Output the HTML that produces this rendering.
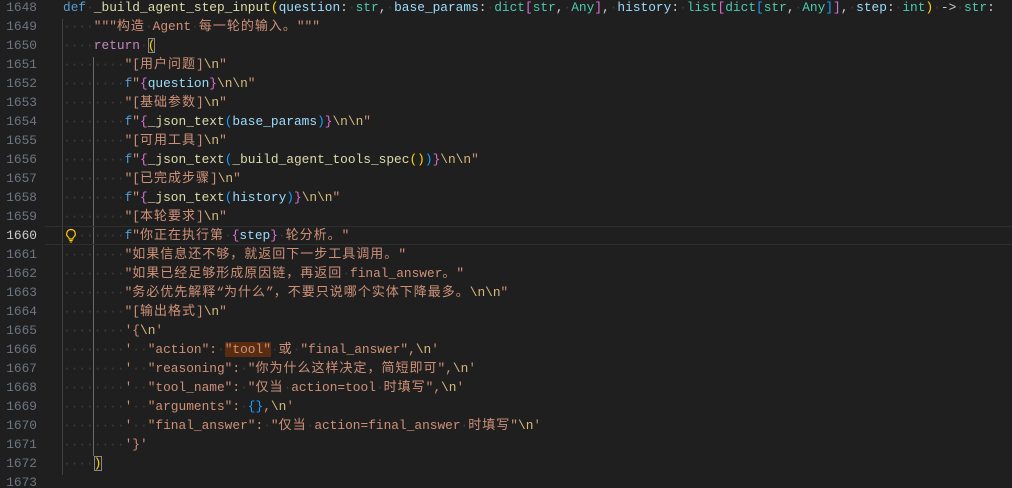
<!DOCTYPE html>
<html><head><meta charset="utf-8"><style>
html,body{margin:0;padding:0;background:#1f1f1f;width:1012px;height:488px;overflow:hidden}
#w{position:relative;top:-2px}
.l{position:relative;height:19px;line-height:19px;white-space:pre;font-family:"Liberation Mono","Noto Sans CJK SC",monospace;font-size:12.83px;color:#cccccc}
.z{font-family:"Noto Sans CJK SC",sans-serif;font-size:13px;letter-spacing:1px;line-height:0}
.n{position:absolute;left:0;width:37px;text-align:right;color:#6e7681}
.c{position:absolute;left:63px;top:0;height:19px}
.k{color:#569cd6}.fn{color:#dcdcaa}.p{color:#9cdcfe}.t{color:#4ec9b0}.s{color:#ce9178}.r{color:#c586c0}.e{color:#d7ba7d}
.b1{color:#ffd700}.b2{color:#da70d6}.b3{color:#179fff}.w{color:#3c3c3c}
.box{outline:1px solid #888;outline-offset:-1px}
.hl{background:#5a2d10}
.g{position:absolute;width:1px;background:#404040}
.cur{position:absolute;left:45px;right:0;border-top:1px solid #2e2e2e;border-bottom:1px solid #2e2e2e;height:17px}
</style></head><body><div id="w">
<div class="g" style="left:62px;top:21px;height:456px"></div>
<div class="g" style="left:93px;top:59px;height:399px;background:#6a6a6a"></div>
<div class="l"><span class="n">1648</span><span class="c"><span class="k">def</span><span class="w">·</span><span class="fn">_build_agent_step_input</span><span class="b1">(</span><span class="p">question</span>:<span class="w">·</span><span class="t">str</span>,<span class="w">·</span><span class="p">base_params</span>:<span class="w">·</span><span class="t">dict</span><span class="b2">[</span><span class="t">str</span>,<span class="w">·</span><span class="t">Any</span><span class="b2">]</span>,<span class="w">·</span><span class="p">history</span>:<span class="w">·</span><span class="t">list</span><span class="b2">[</span><span class="t">dict</span><span class="b3">[</span><span class="t">str</span>,<span class="w">·</span><span class="t">Any</span><span class="b3">]</span><span class="b2">]</span>,<span class="w">·</span><span class="p">step</span>:<span class="w">·</span><span class="t">int</span><span class="b1">)</span><span class="w">·</span>-&gt;<span class="w">·</span><span class="t">str</span>:</span></div>
<div class="l"><span class="n">1649</span><span class="c"><span class="w">····</span><span class="s">"""<span class="z">构造</span></span><span class="w">·</span><span class="s">Agent</span><span class="w">·</span><span class="s"><span class="z">每一轮的输入。</span>"""</span></span></div>
<div class="l"><span class="n">1650</span><span class="c"><span class="w">····</span><span class="r">return</span><span class="w">·</span><span class="b1 box">(</span></span></div>
<div class="l"><span class="n">1651</span><span class="c"><span class="w">········</span><span class="s">"[<span class="z">用户问题</span>]</span><span class="e">\n</span><span class="s">"</span></span></div>
<div class="l"><span class="n">1652</span><span class="c"><span class="w">········</span><span class="k">f</span><span class="s">"</span><span class="b2">{</span><span class="p">question</span><span class="b2">}</span><span class="e">\n\n</span><span class="s">"</span></span></div>
<div class="l"><span class="n">1653</span><span class="c"><span class="w">········</span><span class="s">"[<span class="z">基础参数</span>]</span><span class="e">\n</span><span class="s">"</span></span></div>
<div class="l"><span class="n">1654</span><span class="c"><span class="w">········</span><span class="k">f</span><span class="s">"</span><span class="b2">{</span><span class="fn">_json_text</span><span class="b3">(</span><span class="p">base_params</span><span class="b3">)</span><span class="b2">}</span><span class="e">\n\n</span><span class="s">"</span></span></div>
<div class="l"><span class="n">1655</span><span class="c"><span class="w">········</span><span class="s">"[<span class="z">可用工具</span>]</span><span class="e">\n</span><span class="s">"</span></span></div>
<div class="l"><span class="n">1656</span><span class="c"><span class="w">········</span><span class="k">f</span><span class="s">"</span><span class="b2">{</span><span class="fn">_json_text</span><span class="b3">(</span><span class="fn">_build_agent_tools_spec</span><span class="b1">()</span><span class="b3">)</span><span class="b2">}</span><span class="e">\n\n</span><span class="s">"</span></span></div>
<div class="l"><span class="n">1657</span><span class="c"><span class="w">········</span><span class="s">"[<span class="z">已完成步骤</span>]</span><span class="e">\n</span><span class="s">"</span></span></div>
<div class="l"><span class="n">1658</span><span class="c"><span class="w">········</span><span class="k">f</span><span class="s">"</span><span class="b2">{</span><span class="fn">_json_text</span><span class="b3">(</span><span class="p">history</span><span class="b3">)</span><span class="b2">}</span><span class="e">\n\n</span><span class="s">"</span></span></div>
<div class="l"><span class="n">1659</span><span class="c"><span class="w">········</span><span class="s">"[<span class="z">本轮要求</span>]</span><span class="e">\n</span><span class="s">"</span></span></div>
<div class="l"><div class="cur"></div><span class="n" style="color:#cccccc">1660</span><span class="c"><span class="w">········</span><span class="k">f</span><span class="s">"<span class="z">你正在执行第</span></span><span class="w">·</span><span class="b2">{</span><span class="p">step</span><span class="b2">}</span><span class="w">·</span><span class="s"><span class="z">轮分析。</span>"</span></span><svg style="position:absolute;left:64px;top:2px" width="14" height="15" viewBox="0 0 14 15"><path d="M7 1.5a4.3 4.3 0 0 0-2.6 7.7c.6.5.8 1 .8 1.8h3.6c0-.8.2-1.3.8-1.8A4.3 4.3 0 0 0 7 1.5z" fill="none" stroke="#ffcc00" stroke-width="1.2"/><path d="M5.3 12.5h3.4M5.8 14h2.4" stroke="#ffcc00" stroke-width="1.1"/></svg></div>
<div class="l"><span class="n">1661</span><span class="c"><span class="w">········</span><span class="s">"<span class="z">如果信息还不够，就返回下一步工具调用。</span>"</span></span></div>
<div class="l"><span class="n">1662</span><span class="c"><span class="w">········</span><span class="s">"<span class="z">如果已经足够形成原因链，再返回</span></span><span class="w">·</span><span class="s">final_answer<span class="z">。</span>"</span></span></div>
<div class="l"><span class="n">1663</span><span class="c"><span class="w">········</span><span class="s">"<span class="z">务必优先解释</span>“<span class="z">为什么</span>”<span class="z">，不要只说哪个实体下降最多。</span></span><span class="e">\n\n</span><span class="s">"</span></span></div>
<div class="l"><span class="n">1664</span><span class="c"><span class="w">········</span><span class="s">"[<span class="z">输出格式</span>]</span><span class="e">\n</span><span class="s">"</span></span></div>
<div class="l"><span class="n">1665</span><span class="c"><span class="w">········</span><span class="s">'{</span><span class="e">\n</span><span class="s">'</span></span></div>
<div class="l"><span class="n">1666</span><span class="c"><span class="w">········</span><span class="s">'</span><span class="w">··</span><span class="s">"action":</span><span class="w">·</span><span class="s hl">"tool"</span><span class="w">·</span><span class="s z">或</span><span class="w">·</span><span class="s">"final_answer",</span><span class="e">\n</span><span class="s">'</span></span></div>
<div class="l"><span class="n">1667</span><span class="c"><span class="w">········</span><span class="s">'</span><span class="w">··</span><span class="s">"reasoning":</span><span class="w">·</span><span class="s">"<span class="z">你为什么这样决定，简短即可</span>",</span><span class="e">\n</span><span class="s">'</span></span></div>
<div class="l"><span class="n">1668</span><span class="c"><span class="w">········</span><span class="s">'</span><span class="w">··</span><span class="s">"tool_name":</span><span class="w">·</span><span class="s">"<span class="z">仅当</span></span><span class="w">·</span><span class="s">action=tool</span><span class="w">·</span><span class="s"><span class="z">时填写</span>",</span><span class="e">\n</span><span class="s">'</span></span></div>
<div class="l"><span class="n">1669</span><span class="c"><span class="w">········</span><span class="s">'</span><span class="w">··</span><span class="s">"arguments":</span><span class="w">·</span><span class="b3">{}</span><span class="s">,</span><span class="e">\n</span><span class="s">'</span></span></div>
<div class="l"><span class="n">1670</span><span class="c"><span class="w">········</span><span class="s">'</span><span class="w">··</span><span class="s">"final_answer":</span><span class="w">·</span><span class="s">"<span class="z">仅当</span></span><span class="w">·</span><span class="s">action=final_answer</span><span class="w">·</span><span class="s"><span class="z">时填写</span>"</span><span class="e">\n</span><span class="s">'</span></span></div>
<div class="l"><span class="n">1671</span><span class="c"><span class="w">········</span><span class="s">'}'</span></span></div>
<div class="l"><span class="n">1672</span><span class="c"><span class="w">····</span><span class="b1 box">)</span></span></div>
<div class="l"><span class="n">1673</span><span class="c"></span></div>
</div></body></html>
